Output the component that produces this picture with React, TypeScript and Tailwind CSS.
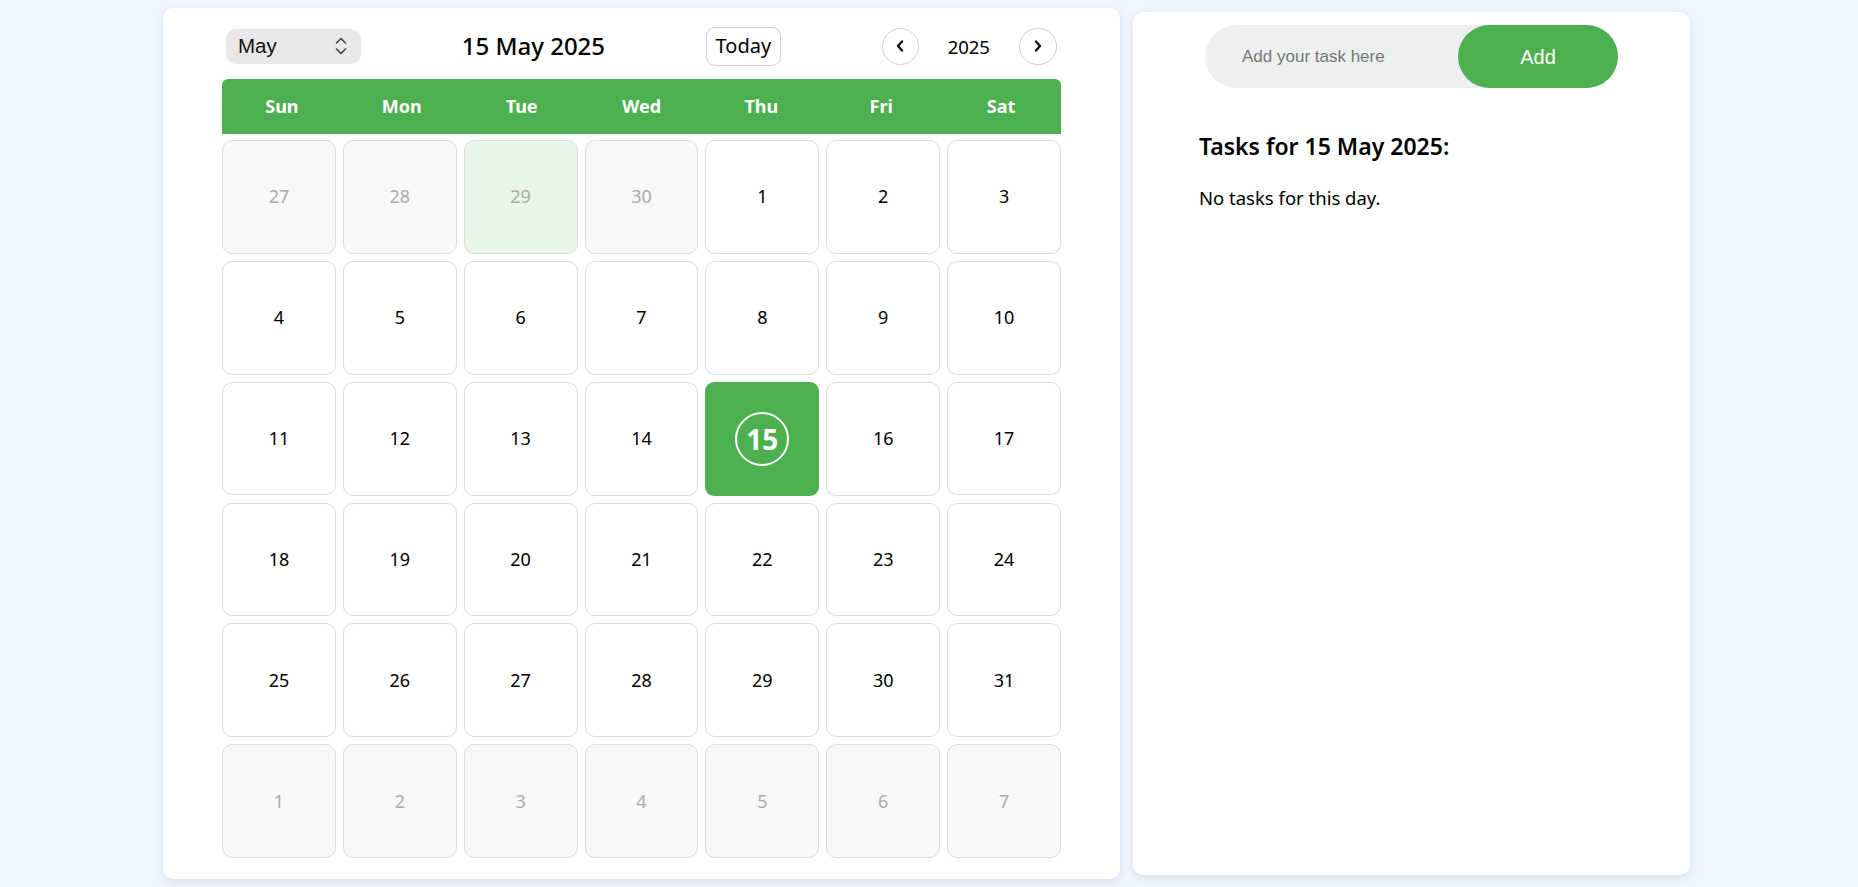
import { useState } from "react";

const months = [
  "January", "February", "March", "April", "May", "June",
  "July", "August", "September", "October", "November", "December",
];
const weekDays = ["Sun", "Mon", "Tue", "Wed", "Thu", "Fri", "Sat"];

type Cell = { day: number; current: boolean; key: string };

function buildCells(year: number, month: number): Cell[] {
  const first = new Date(year, month, 1);
  const start = new Date(year, month, 1 - first.getDay());
  const cells: Cell[] = [];
  for (let i = 0; i < 42; i++) {
    const d = new Date(start.getFullYear(), start.getMonth(), start.getDate() + i);
    cells.push({ day: d.getDate(), current: d.getMonth() === month, key: d.toDateString() });
  }
  return cells;
}

const font = { fontFamily: '"Noto Sans", "Open Sans", sans-serif' };

export default function App() {
  const [year, setYear] = useState(2025);
  const [month, setMonth] = useState(4);
  const [selected, setSelected] = useState(15);
  const [task, setTask] = useState("");

  const cells = buildCells(year, month);
  const label = `${selected} ${month === 4 ? "May" : months[month]} ${year}`;

  return (
    <div
      className="min-h-screen flex items-center justify-center gap-[13px] pr-[5px] bg-[#eff6ff] text-black"
      style={font}
    >
      {/* Calendar card */}
      <div className="w-[957px] bg-white rounded-[10px] shadow-[0_3px_8px_rgba(30,60,100,0.12)] px-[59px] pt-[19px] pb-[21px]">
        <div className="flex items-center justify-between px-1 h-[39px]">
          <div className="w-[135px] h-[35px] rounded-[10px] bg-[#e9e7e8] flex items-center pl-[12px] pr-[14px]">
            <select
              value={month}
              onChange={(e) => setMonth(Number(e.target.value))}
              className="appearance-none bg-transparent flex-1 min-w-0 outline-none text-[20.5px] text-[#111]"
              style={{ fontFamily: '"Liberation Sans", Arial, sans-serif' }}
            >
              {months.map((m, i) => (
                <option key={m} value={i}>{i === 4 ? "May" : m}</option>
              ))}
            </select>
            <svg className="shrink-0" width="12" height="20" viewBox="0 0 12 20" fill="none" stroke="#444" strokeWidth="1.6" strokeLinecap="round" strokeLinejoin="round">
              <polyline points="1.5,7 6,2.5 10.5,7" />
              <polyline points="1.5,13 6,17.5 10.5,13" />
            </svg>
          </div>

          <h2 className="text-[24px] font-medium leading-none">{label}</h2>

          <button
            onClick={() => setSelected(15)}
            className="w-[75px] h-[39px] rounded-[9px] border border-[#cfcfcf] bg-white text-[20px] leading-none"
          >
            Today
          </button>

          <div className="flex items-center gap-[29px]">
            <button
              onClick={() => setYear(year - 1)}
              className="w-[37px] h-[37px] rounded-full border border-[#cfcfcf] bg-white flex items-center justify-center"
            >
              <svg width="8" height="12" viewBox="0 0 8 12" fill="none" stroke="#111" strokeWidth="2.4" strokeLinecap="round" strokeLinejoin="round">
                <polyline points="6,1.5 2,6 6,10.5" />
              </svg>
            </button>
            <span className="text-[18.5px]">{year}</span>
            <button
              onClick={() => setYear(year + 1)}
              className="w-[38px] h-[37px] rounded-full border border-[#cfcfcf] bg-white flex items-center justify-center"
            >
              <svg width="8" height="12" viewBox="0 0 8 12" fill="none" stroke="#111" strokeWidth="2.4" strokeLinecap="round" strokeLinejoin="round">
                <polyline points="2,1.5 6,6 2,10.5" />
              </svg>
            </button>
          </div>
        </div>

        <div className="mt-[13px] grid grid-cols-7 h-[55px] bg-[#4caf50] rounded-t-[6px] text-white font-bold text-[18px]">
          {weekDays.map((d) => (
            <div key={d} className="flex items-center justify-center">{d}</div>
          ))}
        </div>

        <div className="mt-[6px] grid grid-cols-7 gap-[7px]">
          {cells.map((c, i) => {
            const isSel = c.current && c.day === selected;
            if (isSel) {
              return (
                <div key={c.key} className="aspect-square rounded-[9px] bg-[#4caf50] flex items-center justify-center">
                  <span className="w-[54px] h-[54px] rounded-full border-2 border-white flex items-center justify-center text-white font-bold text-[28px]">
                    {c.day}
                  </span>
                </div>
              );
            }
            const tinted = i === 2;
            return (
              <div
                key={c.key}
                onClick={() => c.current && setSelected(c.day)}
                className={`aspect-square rounded-[10px] border border-[#dcdcdc] flex items-center justify-center text-[18px] ${
                  c.current ? "bg-white text-black" : tinted ? "bg-[#e8f5e9] text-[#aaa]" : "bg-[#f8f8f8] text-[#aaa]"
                }`}
              >
                {c.day}
              </div>
            );
          })}
        </div>
      </div>

      {/* Tasks card */}
      <div className="w-[557px] h-[863px] bg-white rounded-[10px] shadow-[0_3px_8px_rgba(30,60,100,0.12)] pt-[13px]">
        <div className="w-[413px] h-[63px] mx-auto flex rounded-full bg-[#eeeff1]" style={{ fontFamily: '"Liberation Sans", Arial, sans-serif' }}>
          <input
            value={task}
            onChange={(e) => setTask(e.target.value)}
            placeholder="Add your task here"
            className="flex-1 min-w-0 bg-transparent outline-none pl-[37px] text-[17px] placeholder:text-[#757575]"
          />
          <button className="w-[160px] h-full rounded-full bg-[#4caf50] text-white text-[20px]">Add</button>
        </div>

        <div className="px-[66px] mt-[40px]">
          <h3 className="text-[23px] font-semibold leading-[36px]">Tasks for {label}:</h3>
          <p className="mt-[19px] text-[18.5px] leading-[30px]">No tasks for this day.</p>
        </div>
      </div>
    </div>
  );
}
